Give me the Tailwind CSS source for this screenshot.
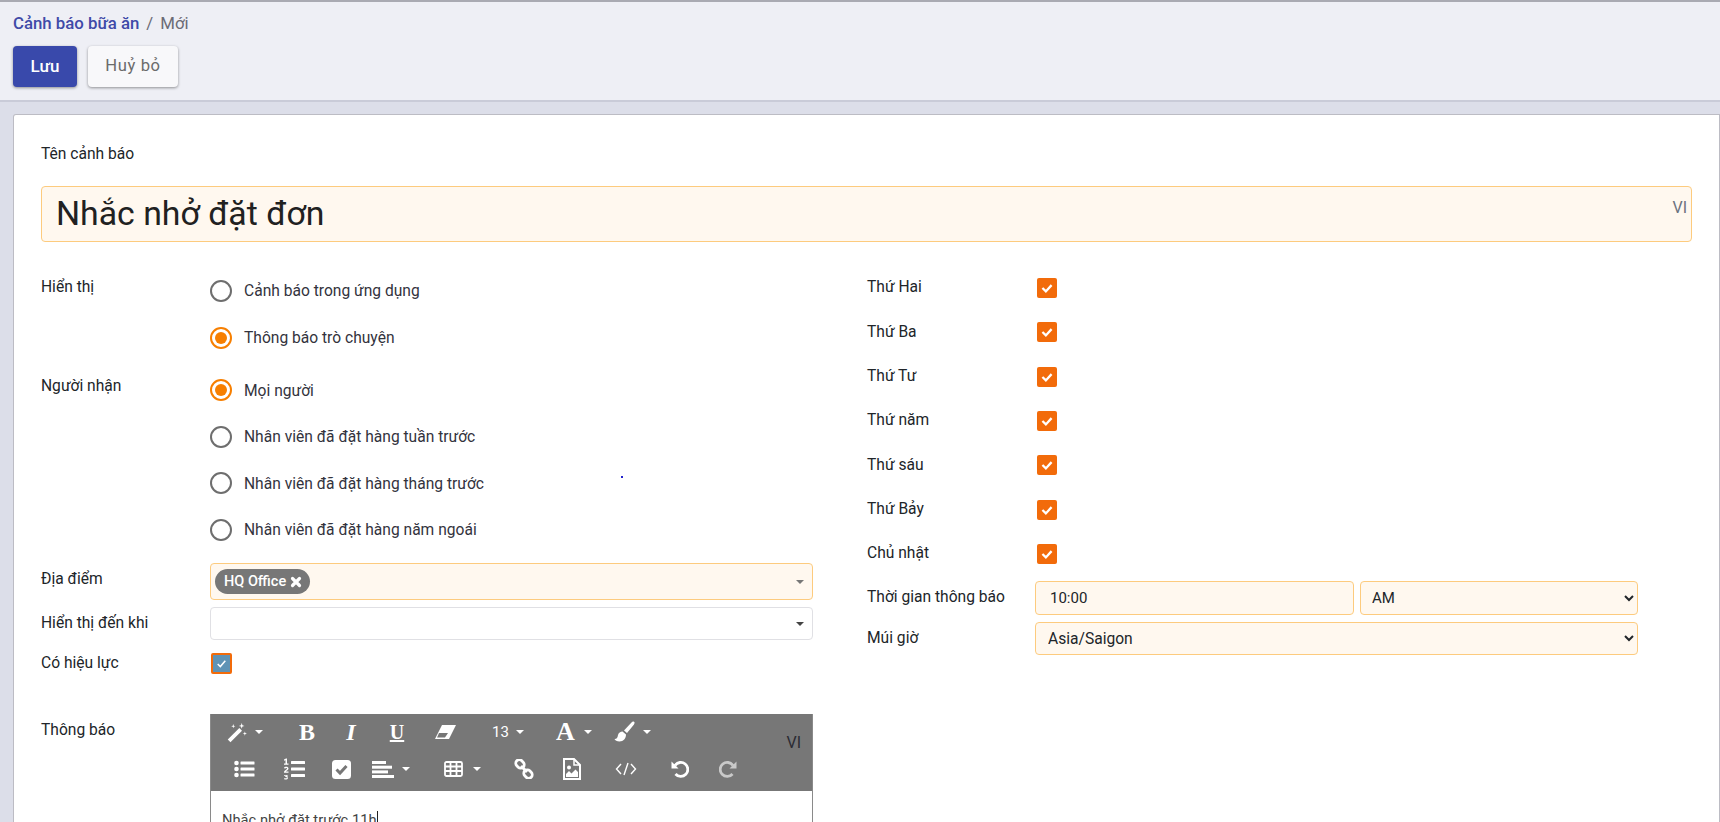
<!DOCTYPE html>
<html lang="vi">
<head>
<meta charset="UTF-8" />
<title>Cảnh báo bữa ăn</title>
<script src="https://cdn.jsdelivr.net/npm/@tailwindcss/browser@4"></script>
</head>
<body class="h-screen overflow-hidden bg-[#dcdee9] font-[Roboto,sans-serif] text-[15.6px] text-[#212529]">
  <!-- header -->
  <header class="h-[102px] border-t-2 border-b-2 border-t-[#a9aab2] border-b-[#c9cbd8] bg-[#eeeff5] pl-[13px]">
    <div class="flex h-[44px] items-center gap-[7px] text-[16.8px] font-medium">
      <span class="text-[#3f4aa8]">Cảnh báo bữa ăn</span>
      <span class="font-normal text-[#6b6b75]">/</span>
      <span class="font-normal text-[#6b6b75]">Mới</span>
    </div>
    <div class="flex gap-[11px]">
      <button class="h-[41px] w-[64px] rounded-[4px] bg-[#3949ab] text-[17px] font-medium text-white shadow-[0_1px_3px_rgba(0,0,0,0.4)]">Lưu</button>
      <button class="h-[41px] w-[90px] rounded-[4px] bg-[#f8f8fa] text-[16.6px] tracking-[0.6px] text-[#6b6b6b] shadow-[0_1px_3px_rgba(0,0,0,0.4)]">Huỷ bỏ</button>
    </div>
  </header>

  <!-- card -->
  <main class="relative mt-[12px] ml-[13px] h-[720px] rounded-tl-[3px] border-t border-l border-r border-[#bcbcc4] bg-white pl-[27px] pr-[27px]">
    <div class="flex h-[71px] items-end pb-[20px]">Tên cảnh báo</div>
    <div class="relative flex h-[56px] items-center rounded-[4px] border border-[#fdcb7e] bg-[#fff8ef] pl-[14px] text-[33.8px] text-[#212121]">
      Nhắc nhở đặt đơn
      <span class="absolute top-[9px] right-[4px] text-[16px] text-[#6b7280]">VI</span>
    </div>

    <div class="mt-[25px] flex">
      <!-- left column -->
      <div class="w-[772px]">
        <div class="flex">
          <div class="w-[169px] pt-[9px]">Hiển thị</div>
          <div>
            <div class="flex h-[47px] items-center gap-[12px]">
              <span class="h-[22px] w-[22px] rounded-full border-2 border-[#6e6e6e]"></span>
              <span class="pt-[2px] text-[#33333d]">Cảnh báo trong ứng dụng</span>
            </div>
            <div class="flex h-[47px] items-center gap-[12px]">
              <span class="flex h-[22px] w-[22px] items-center justify-center rounded-full border-2 border-[#f77f00]"><span class="h-[12px] w-[12px] rounded-full bg-[#f77f00]"></span></span>
              <span class="pt-[2px] text-[#33333d]">Thông báo trò chuyện</span>
            </div>
          </div>
        </div>
        <div class="mt-[6px] flex">
          <div class="w-[169px] pt-[8px]">Người nhận</div>
          <div>
            <div class="flex h-[46.5px] items-center gap-[12px]">
              <span class="flex h-[22px] w-[22px] items-center justify-center rounded-full border-2 border-[#f77f00]"><span class="h-[12px] w-[12px] rounded-full bg-[#f77f00]"></span></span>
              <span class="pt-[2px] text-[#33333d]">Mọi người</span>
            </div>
            <div class="flex h-[46.5px] items-center gap-[12px]">
              <span class="h-[22px] w-[22px] rounded-full border-2 border-[#6e6e6e]"></span>
              <span class="pt-[2px] text-[#33333d]">Nhân viên đã đặt hàng tuần trước</span>
            </div>
            <div class="flex h-[46.5px] items-center gap-[12px]">
              <span class="h-[22px] w-[22px] rounded-full border-2 border-[#6e6e6e]"></span>
              <span class="pt-[2px] text-[#33333d]">Nhân viên đã đặt hàng tháng trước</span>
            </div>
            <div class="flex h-[46.5px] items-center gap-[12px]">
              <span class="h-[22px] w-[22px] rounded-full border-2 border-[#6e6e6e]"></span>
              <span class="pt-[2px] text-[#33333d]">Nhân viên đã đặt hàng năm ngoái</span>
            </div>
          </div>
        </div>

        <div class="mt-[10px] flex h-[37px]">
          <div class="flex w-[169px] items-center pb-[3px]">Địa điểm</div>
          <div class="flex flex-1 items-center justify-between rounded-[4px] border border-[#fdcb7e] bg-[#fff8ef] pr-[8px] pl-[4px]">
            <span class="flex h-[25px] items-center gap-[4px] rounded-full bg-[#777777] pr-[8px] pl-[9px] text-[14.5px] font-medium text-white">HQ Office
              <svg class="h-[12px] w-[12px]" viewBox="0 0 12 12"><path d="M2.500 2.500l7 7m0-7l-7 7" stroke="#fff" stroke-width="3.200" stroke-linecap="round"/></svg>
            </span>
            <span class="h-0 w-0 border-x-[4px] border-t-[4px] border-x-transparent border-t-[#777777]"></span>
          </div>
        </div>
        <div class="mt-[7px] flex h-[33px]">
          <div class="flex w-[169px] items-center pt-[1px]">Hiển thị đến khi</div>
          <div class="flex flex-1 items-center justify-end rounded-[4px] border border-[#e0e0e4] bg-white pr-[8px]">
            <span class="h-0 w-0 border-x-[4px] border-t-[4px] border-x-transparent border-t-[#444444]"></span>
          </div>
        </div>
        <div class="mt-[13px] flex h-[21px]">
          <div class="flex w-[170px] items-center pt-[1px]">Có hiệu lực</div>
          <span class="flex h-[21px] w-[21px] items-center justify-center rounded-[2px] border-2 border-[#f26b0a] bg-[#5f93b5]">
            <svg class="h-[13px] w-[13px]" viewBox="0 0 12 12" fill="none"><path d="M2.500 6.500l2.400 2.300 4.600-5.300" stroke="#fff" stroke-width="1.400"/></svg>
          </span>
        </div>

        <!-- editor -->
        <div class="mt-[40px] flex">
          <div class="w-[169px] pt-[5px]">Thông báo</div>
          <div class="flex-1 border-x border-[#8a8a8a]">
            <div class="relative h-[77px] bg-[#777777] text-white">
              <span class="absolute top-[17px] right-[11px] text-[16px] text-[#2b2b33]">VI</span>
              <div class="flex h-[36px] items-center">
                <svg class="ml-[16px] h-[21px] w-[21px]" viewBox="0 0 20 20" fill="none"><path d="M2 18L13 7" stroke="#fff" stroke-width="3.600"/><path d="M14 1l.7 2 2 .7-2 .7-.7 2-.7-2-2-.7 2-.7zM6 2l.5 1.500L8 4l-1.500.5L6 6l-.5-1.500L4 4l1.500-.5zM17 9l.5 1.500 1.500.5-1.500.5L17 13l-.5-1.500-1.500-.5 1.500-.5z" fill="#fff"/></svg>
                <span class="ml-[7px] h-0 w-0 border-x-[4px] border-t-[4px] border-x-transparent border-t-white"></span>
                <span class="ml-[35px] w-[18px] text-center font-['Liberation_Serif',serif] text-[24px] leading-none font-bold">B</span>
                <span class="ml-[29px] w-[12px] text-center font-['Liberation_Serif',serif] text-[24px] leading-none font-bold italic">I</span>
                <span class="ml-[31px] w-[18px] text-center font-['Liberation_Serif',serif] text-[20px] leading-none font-bold underline">U</span>
                <svg class="ml-[28px] h-[16px] w-[23px]" viewBox="0 0 23 16"><path d="M8 1h14L15 15H1z" fill="#fff"/><path d="M5 9h9l-3 4.500H3z" fill="#777777"/></svg>
                <span class="ml-[35px] text-[15px]">13</span>
                <span class="ml-[7px] h-0 w-0 border-x-[4px] border-t-[4px] border-x-transparent border-t-white"></span>
                <span class="ml-[32px] w-[19px] text-center font-['Liberation_Serif',serif] text-[26px] leading-none font-bold">A</span>
                <span class="ml-[9px] h-0 w-0 border-x-[4px] border-t-[4px] border-x-transparent border-t-white"></span>
                <svg class="ml-[22px] h-[22px] w-[22px]" viewBox="0 0 22 22"><path d="M20 0.800c1 .6.600 1.900-.2 2.900L13 12l-3-2.500L17.500 1.400c.8-.8 1.700-1.100 2.500-.6z" fill="#fff"/><path d="M8.500 10.500l3.500 3c0 4-2.500 7-6.500 7-2.500 0-4.500-1-5-2.500 2.500 0 3-1.500 3.500-4 .5-2 2.500-3.500 4.500-3.500z" fill="#fff"/></svg>
                <span class="ml-[7px] h-0 w-0 border-x-[4px] border-t-[4px] border-x-transparent border-t-white"></span>
              </div>
              <div class="flex h-[40px] items-center pb-[2px]">
                <svg class="ml-[23px] h-[18px] w-[21px]" viewBox="0 0 21 18" fill="#fff"><circle cx="2.500" cy="3" r="2.300"/><circle cx="2.500" cy="9" r="2.300"/><circle cx="2.500" cy="15" r="2.300"/><rect x="6.500" y="1.500" width="14" height="3" rx=".5"/><rect x="6.500" y="7.500" width="14" height="3" rx=".5"/><rect x="6.500" y="13.500" width="14" height="3" rx=".5"/></svg>
                <svg class="ml-[28px] h-[22px] w-[22px]" viewBox="0 0 22 22" fill="#fff"><path d="M1 1.500l2-1h1v5h1.500v1.200h-4.500V5.500H2.500V2.300L1 2.800zM1 9.500c.5-.8 4.500-1.500 4.500 1 0 1.500-2 2-2.500 3h2.500v1.200H1v-1c.5-1.500 3-2.200 3-3.200 0-.8-1.500-.5-2.200.3zM1 17h3c1 .5 1 1.300.3 1.900.9.500.9 2.100-.8 2.600-1 .2-2-.1-2.500-.5l.6-1c.6.4 2.200.5 2.200-.3 0-.5-.7-.6-1.500-.6v-1c.7 0 1.300-.1 1.300-.4H1z"/><rect x="8" y="3" width="14" height="3" rx=".5"/><rect x="8" y="9.500" width="14" height="3" rx=".5"/><rect x="8" y="16" width="14" height="3" rx=".5"/></svg>
                <svg class="ml-[27px] h-[19px] w-[19px]" viewBox="0 0 19 19"><rect width="19" height="19" rx="3.500" fill="#fff"/><path d="M4.500 9.500l3.500 3.500 6.500-7" fill="none" stroke="#777777" stroke-width="3"/></svg>
                <svg class="ml-[21px] h-[17px] w-[22px]" viewBox="0 0 22 17" fill="#fff"><rect y="0" width="14" height="3"/><rect y="4.700" width="20" height="3"/><rect y="9.400" width="16" height="3"/><rect y="14" width="22" height="3"/></svg>
                <span class="ml-[8px] h-0 w-0 border-x-[4px] border-t-[4px] border-x-transparent border-t-white"></span>
                <svg class="ml-[34px] h-[16px] w-[19px]" viewBox="0 0 19 16" fill="none" stroke="#fff" stroke-width="1.800"><rect x="1" y="1" width="17" height="14" rx="1.500"/><path d="M1 5.500h17M1 10h17M6.500 1v14M12.500 1v14"/></svg>
                <span class="ml-[10px] h-0 w-0 border-x-[4px] border-t-[4px] border-x-transparent border-t-white"></span>
                <svg class="ml-[33px] h-[20px] w-[20px]" viewBox="0 0 20 20" fill="none" stroke="#fff" stroke-width="2.800"><rect x="1.500" y="1.500" width="9" height="7" rx="3.500" transform="rotate(45 6 5)"/><rect x="9.500" y="11.500" width="9" height="7" rx="3.500" transform="rotate(45 14 15)"/><path d="M7 7l6 6"/></svg>
                <svg class="ml-[29px] h-[22px] w-[18px]" viewBox="0 0 18 22"><path d="M1 1h10l6 6v14H1z" fill="none" stroke="#fff" stroke-width="2"/><path d="M11 1v6h6" fill="none" stroke="#fff" stroke-width="1.500"/><circle cx="6" cy="9.500" r="2" fill="#fff"/><path d="M3 19v-3l3-3 2.500 2.500 4-4L15 14v5z" fill="#fff"/></svg>
                <svg class="ml-[34px] h-[14px] w-[22px]" viewBox="0 0 22 14" fill="none" stroke="#fff" stroke-width="1.400"><path d="M6 2L1.500 7 6 12M16 2l4.500 5L16 12M13 1L9 13"/></svg>
                <svg class="ml-[34px] h-[18px] w-[18px]" viewBox="0 0 18 18" fill="none"><path d="M4 5.500A7 7 0 1 1 4.500 14" stroke="#fff" stroke-width="2.800"/><path d="M0.500 1.500v7h7z" fill="#fff"/></svg>
                <svg class="ml-[30px] h-[18px] w-[18px]" viewBox="0 0 18 18" fill="none"><path d="M14 5.500A7 7 0 1 0 13.500 14" stroke="#c9c9c9" stroke-width="2.800"/><path d="M17.500 1.500v7h-7z" fill="#c9c9c9"/></svg>
              </div>
            </div>
            <div class="px-[11px] pt-[18px] text-[14.7px] text-[#444444]">Nhắc nhở đặt trước 11h<span class="border-l border-[#222222]"></span></div>
          </div>
        </div>
      </div>

      <!-- right column -->
      <div class="-mt-[1px] ml-[54px] w-[771px]">
        <div class="flex h-[44.3px] items-center"><span class="w-[170px]">Thứ Hai</span>
          <span class="flex h-[20px] w-[20px] items-center justify-center rounded-[2px] bg-[#f26b0a]"><svg class="h-[16px] w-[16px]" viewBox="0 0 14 14" fill="none"><path d="M3 7l3 3 5-5.500" stroke="#fff" stroke-width="2"/></svg></span></div>
        <div class="flex h-[44.3px] items-center"><span class="w-[170px]">Thứ Ba</span>
          <span class="flex h-[20px] w-[20px] items-center justify-center rounded-[2px] bg-[#f26b0a]"><svg class="h-[16px] w-[16px]" viewBox="0 0 14 14" fill="none"><path d="M3 7l3 3 5-5.500" stroke="#fff" stroke-width="2"/></svg></span></div>
        <div class="flex h-[44.3px] items-center"><span class="w-[170px]">Thứ Tư</span>
          <span class="flex h-[20px] w-[20px] items-center justify-center rounded-[2px] bg-[#f26b0a]"><svg class="h-[16px] w-[16px]" viewBox="0 0 14 14" fill="none"><path d="M3 7l3 3 5-5.500" stroke="#fff" stroke-width="2"/></svg></span></div>
        <div class="flex h-[44.3px] items-center"><span class="w-[170px]">Thứ năm</span>
          <span class="flex h-[20px] w-[20px] items-center justify-center rounded-[2px] bg-[#f26b0a]"><svg class="h-[16px] w-[16px]" viewBox="0 0 14 14" fill="none"><path d="M3 7l3 3 5-5.500" stroke="#fff" stroke-width="2"/></svg></span></div>
        <div class="flex h-[44.3px] items-center"><span class="w-[170px]">Thứ sáu</span>
          <span class="flex h-[20px] w-[20px] items-center justify-center rounded-[2px] bg-[#f26b0a]"><svg class="h-[16px] w-[16px]" viewBox="0 0 14 14" fill="none"><path d="M3 7l3 3 5-5.500" stroke="#fff" stroke-width="2"/></svg></span></div>
        <div class="flex h-[44.3px] items-center"><span class="w-[170px]">Thứ Bảy</span>
          <span class="flex h-[20px] w-[20px] items-center justify-center rounded-[2px] bg-[#f26b0a]"><svg class="h-[16px] w-[16px]" viewBox="0 0 14 14" fill="none"><path d="M3 7l3 3 5-5.500" stroke="#fff" stroke-width="2"/></svg></span></div>
        <div class="flex h-[44.3px] items-center"><span class="w-[170px]">Chủ nhật</span>
          <span class="flex h-[20px] w-[20px] items-center justify-center rounded-[2px] bg-[#f26b0a]"><svg class="h-[16px] w-[16px]" viewBox="0 0 14 14" fill="none"><path d="M3 7l3 3 5-5.500" stroke="#fff" stroke-width="2"/></svg></span></div>

        <div class="mt-[5px] flex h-[34px] items-center">
          <span class="w-[168px]">Thời gian thông báo</span>
          <input value="10:00" class="h-full w-[319px] rounded-[4px] border border-[#fdcb7e] bg-[#fff8ef] pl-[14px] text-[15px]" />
          <select class="ml-[6px] h-full w-[278px] rounded-[4px] border border-[#fdcb7e] bg-[#fff8ef] pl-[7px] text-[15px]"><option>AM</option></select>
        </div>
        <div class="mt-[7px] flex h-[33px] items-center">
          <span class="w-[168px]">Múi giờ</span>
          <select class="h-full w-[603px] rounded-[4px] border border-[#fdcb7e] bg-[#fff8ef] pl-[8px] text-[15.6px]"><option>Asia/Saigon</option></select>
        </div>
      </div>
    </div>
    <!-- stray dot from the capture -->
    <span class="absolute top-[361px] left-[607px] h-[2px] w-[2px] bg-[#2222cc]"></span>
  </main>
</body>
</html>
